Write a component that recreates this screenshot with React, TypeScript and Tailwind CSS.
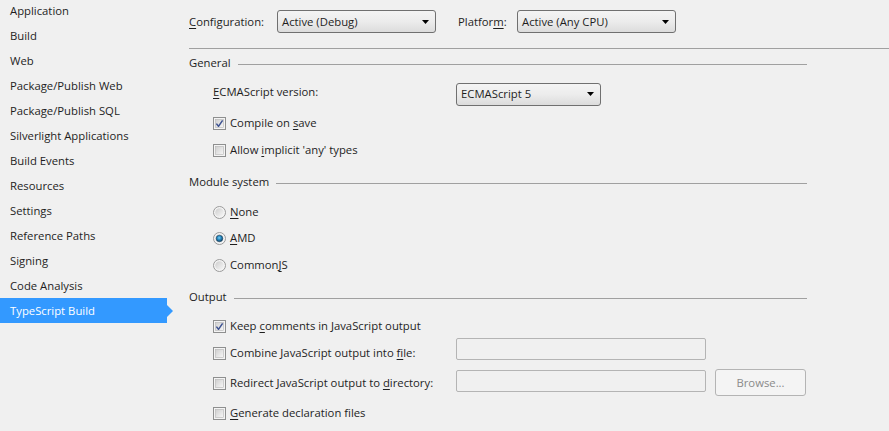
import React from "react";

const FONT = { fontFamily: '"Open Sans", "Noto Sans", sans-serif' };

function U({ children }: { children: React.ReactNode }) {
  return <span className="underline underline-offset-[2px] decoration-[1px]">{children}</span>;
}

function Arrow() {
  return (
    <svg width="7" height="4" viewBox="0 0 7 4" className="shrink-0">
      <path d="M0 0 H7 L3.5 4 Z" fill="#000" />
    </svg>
  );
}

function Dropdown({ text, width }: { text: string; width: string }) {
  return (
    <div
      className={`${width} h-[23px] shrink-0 flex items-center justify-between pl-[4px] pr-[6px] border border-[#707070] rounded-[3px] bg-linear-to-b from-[#f4f4f4] via-[#ececec] to-[#dcdcdc]`}
    >
      <span className="pt-[1px]">{text}</span>
      <Arrow />
    </div>
  );
}

function Checkbox({ checked }: { checked?: boolean }) {
  return (
    <svg width="13" height="13" viewBox="0 0 13 13" className="shrink-0">
      <defs>
        <linearGradient id="cbg" x1="0" y1="0" x2="1" y2="1">
          <stop offset="0" stopColor="#cfcfcf" />
          <stop offset="1" stopColor="#f7f7f7" />
        </linearGradient>
      </defs>
      <rect x="0.5" y="0.5" width="12" height="12" fill="#f4f4f4" stroke="#8e8f8f" />
      <rect x="2.5" y="2.5" width="8" height="8" fill="url(#cbg)" stroke="#b5b5b5" strokeWidth="0.6" />
      {checked && (
        <path d="M3.4 6.6 L5.5 9.3 L9.6 3.3" fill="none" stroke="#3d5291" strokeWidth="1.5" strokeLinejoin="round" />
      )}
    </svg>
  );
}

function Radio({ checked }: { checked?: boolean }) {
  return (
    <svg width="13" height="13" viewBox="0 0 13 13" className="shrink-0">
      <defs>
        <linearGradient id="rbg" x1="0" y1="0" x2="1" y2="1">
          <stop offset="0" stopColor="#cdcdcd" />
          <stop offset="1" stopColor="#f8f8f8" />
        </linearGradient>
        <radialGradient id="rdot" cx="0.45" cy="0.4" r="0.6">
          <stop offset="0" stopColor="#7fd0f5" />
          <stop offset="0.45" stopColor="#2a8dc4" />
          <stop offset="1" stopColor="#0f3f63" />
        </radialGradient>
      </defs>
      <circle cx="6.5" cy="6.5" r="6" fill="#f4f4f4" stroke="#9a9a9a" />
      <circle cx="6.5" cy="6.5" r="4.3" fill="url(#rbg)" />
      {checked && <circle cx="6.5" cy="6.5" r="3.3" fill="url(#rdot)" stroke="#163e5a" strokeWidth="0.5" />}
    </svg>
  );
}

function CheckRow({ checked, children, cls = "" }: { checked?: boolean; children: React.ReactNode; cls?: string }) {
  return (
    <div className={`h-[16px] flex items-center pl-[24px] ${cls}`}>
      <Checkbox checked={checked} />
      <span className="ml-[4px] pt-[1px]">{children}</span>
    </div>
  );
}

function RadioRow({ checked, children, cls = "" }: { checked?: boolean; children: React.ReactNode; cls?: string }) {
  return (
    <div className={`h-[16px] flex items-center pl-[24px] ${cls}`}>
      <Radio checked={checked} />
      <span className="ml-[4px] pt-[1px]">{children}</span>
    </div>
  );
}

function Section({ title, cls = "" }: { title: string; cls?: string }) {
  return (
    <div className={`h-[16px] w-[618px] flex items-center ${cls}`}>
      <span className="pt-[1px]">{title}</span>
      <div className="flex-1 h-px bg-[#a0a0a0] ml-[7px] mt-[2px]" />
    </div>
  );
}

function TextBox() {
  return <div className="w-[250px] h-[22px] border border-[#b4b4b4] rounded-[2px] bg-[#f0f0f0]" />;
}

const NAV = [
  "Application",
  "Build",
  "Web",
  "Package/Publish Web",
  "Package/Publish SQL",
  "Silverlight Applications",
  "Build Events",
  "Resources",
  "Settings",
  "Reference Paths",
  "Signing",
  "Code Analysis",
  "TypeScript Build",
];

export default function App() {
  return (
    <div
      className="w-[889px] h-[431px] overflow-hidden bg-[#f0f0f0] text-[#1e1e1e] text-[11.3px] flex"
      style={FONT}
    >
      <div className="w-[189px] shrink-0 flex flex-col mt-[-2px]">
        {NAV.map((n, i) => {
          const sel = i === NAV.length - 1;
          return (
            <div key={n} className="h-[25px] shrink-0 relative flex">
              {sel ? (
                <>
                  <div className="w-[167px] h-full bg-[#3399ff] text-white flex items-center pl-[10px] pt-[1px]">{n}</div>
                  <svg width="6" height="12" viewBox="0 0 6 12" className="absolute left-[167px] top-[7px]">
                    <path d="M0 0 L6 6 L0 12 Z" fill="#3399ff" />
                  </svg>
                </>
              ) : (
                <div className="h-full flex items-center pl-[10px] pt-[2px]">{n}</div>
              )}
            </div>
          );
        })}
      </div>

      <div className="flex-1 flex flex-col">
        <div className="mt-[10px] h-[23px] flex items-center">
          <span className="w-[88px] shrink-0 pt-[1px]">
            <U>C</U>onfiguration:
          </span>
          <Dropdown text="Active (Debug)" width="w-[159px]" />
          <span className="ml-[22px] w-[59px] shrink-0 pt-[1px]">
            Platfor<U>m</U>:
          </span>
          <Dropdown text="Active (Any CPU)" width="w-[159px]" />
        </div>

        <div className="mt-[15px] h-px bg-[#a0a0a0]" />

        <Section title="General" cls="mt-[6px]" />

        <div className="mt-[12px] h-[22px] flex items-center pl-[24px]">
          <span className="w-[243px] shrink-0 mt-[-3px]">
            <U>E</U>CMAScript version:
          </span>
          <Dropdown text="ECMAScript 5" width="w-[145px]" />
        </div>

        <CheckRow checked cls="mt-[10px]">
          Compile on <U>s</U>ave
        </CheckRow>
        <CheckRow cls="mt-[11px]">
          Allow <U>i</U>mplicit 'any' types
        </CheckRow>

        <Section title="Module system" cls="mt-[16px]" />

        <RadioRow cls="mt-[14px]">
          <U>N</U>one
        </RadioRow>
        <RadioRow checked cls="mt-[10px]">
          <U>A</U>MD
        </RadioRow>
        <RadioRow cls="mt-[11px]">
          Common<U>J</U>S
        </RadioRow>

        <Section title="Output" cls="mt-[16px]" />

        <CheckRow checked cls="mt-[13px]">
          Keep <U>c</U>omments in JavaScript output
        </CheckRow>

        <div className="mt-[4px] h-[26px] flex items-start">
          <div className="w-[267px] shrink-0 mt-[7px] h-[16px] flex items-center pl-[24px]">
            <Checkbox />
            <span className="ml-[4px] pt-[1px]">
              Combine JavaScript output into <U>f</U>ile:
            </span>
          </div>
          <TextBox />
        </div>

        <div className="mt-[5px] h-[27px] flex items-start">
          <div className="w-[267px] shrink-0 mt-[6px] h-[16px] flex items-center pl-[24px]">
            <Checkbox />
            <span className="ml-[4px] pt-[1px]">
              Redirect JavaScript output to <U>d</U>irectory:
            </span>
          </div>
          <div className="mt-[1px]">
            <TextBox />
          </div>
          <div className="ml-[9px] w-[91px] h-[27px] border border-[#b4b4b4] rounded-[3px] bg-[#f4f4f4] text-[#8a8a8a] flex items-center justify-center pt-[1px]">
            Browse...
          </div>
        </div>

        <CheckRow cls="mt-[9px]">
          <U>G</U>enerate declaration files
        </CheckRow>
      </div>
    </div>
  );
}
